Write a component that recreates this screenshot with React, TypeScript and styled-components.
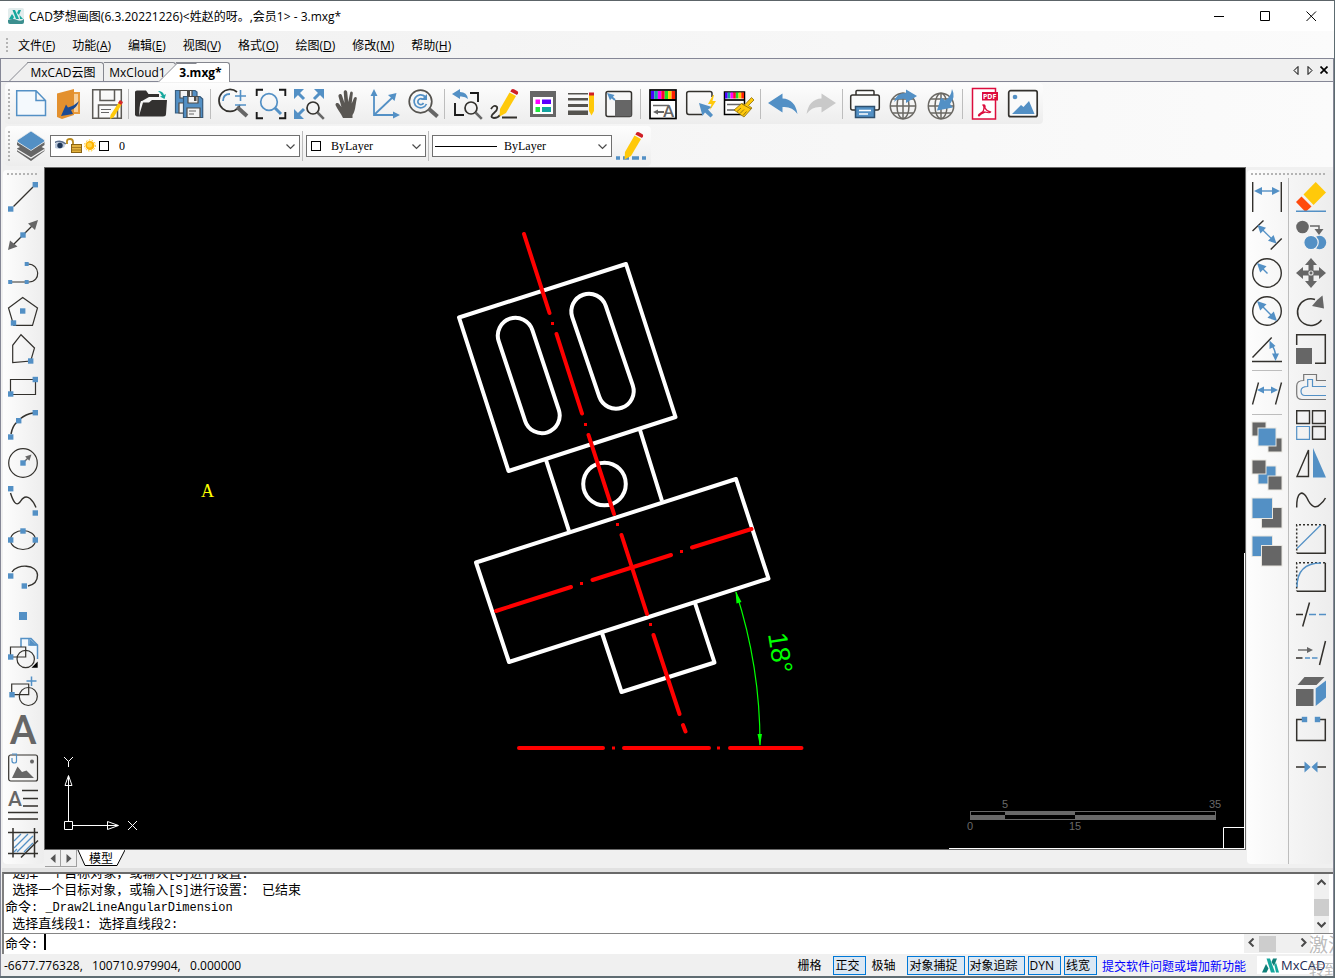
import React from "react";
import styled, { createGlobalStyle, css } from "styled-components";

const BLUE = "#5390c5";
const DARK = "#33312d";
const GRAY = "#666666";
const UI = `"Open Sans", "Noto Sans CJK SC", sans-serif`;
const SERIF = `"Liberation Serif", "Noto Sans CJK SC", serif`;

const GlobalStyle = createGlobalStyle`
  *, *::before, *::after { box-sizing: border-box; }
  body { margin: 0; background: #f0f0f0; font-family: ${UI}; font-size: 12px; color: #000; }
  button, input, select { font: inherit; color: inherit; margin: 0; padding: 0; border: 0; background: none; border-radius: 0; }
  svg { display: block; }
`;

/* ---------- window frame ---------- */

const Window = styled.div`
  position: relative;
  display: flex;
  flex-direction: column;
  min-height: 100vh;
  overflow: hidden;
  border-top: 1px solid #5c6468;
  border-right: 1px solid #5c6b70;
  border-bottom: 2px solid #5f6c72;
`;

const TitleBar = styled.header`
  display: flex;
  align-items: center;
  height: 30px;
  padding-left: 8px;
  background: #fff;
`;

const Title = styled.h1`
  flex: 1;
  margin: 0 0 0 5px;
  font-size: 12px;
  font-weight: 400;
  white-space: nowrap;
`;

const CaptionButton = styled.button`
  display: grid;
  place-items: center;
  width: 46px;
  height: 30px;
`;

const MenuBar = styled.nav`
  display: flex;
  align-items: center;
  gap: 17px;
  height: 27px;
  padding-left: 6px;
  background: linear-gradient(90deg, #f0f0f0, #fbfbfb);
`;

const MenuButton = styled.button`
  height: 22px;
  white-space: nowrap;
`;

const Grip = styled.span<{ $across?: boolean }>`
  flex: none;
  ${(p) =>
    p.$across
      ? css`
          height: 2px;
          margin: 3px 6px 3px 4px;
          background: repeating-linear-gradient(90deg, #b4b4b4 0 2px, transparent 2px 4px);
        `
      : css`
          width: 2px;
          height: 30px;
          margin-right: 2px;
          background: repeating-linear-gradient(180deg, #b4b4b4 0 2px, transparent 2px 4px);
        `}
`;

const MenuGrip = styled(Grip)`
  height: 14px;
  margin-right: -7px;
`;

const Client = styled.div`
  flex: 1;
  display: flex;
  flex-direction: column;
  border-top: 1px solid #858796;
  border-left: 1px solid #858796;
  border-right: 1px solid #858796;
`;

/* ---------- document tabs ---------- */

const TabStrip = styled.div`
  display: flex;
  align-items: flex-end;
  height: 23px;
  padding-left: 26px;
  border-bottom: 1px solid #858796;
  background: #f0f0f0;
`;

const DocTab = styled.button<{ $active?: boolean; $slanted?: boolean; $width: number }>`
  position: relative;
  width: ${(p) => p.$width}px;
  height: ${(p) => (p.$active ? 20 : 19)}px;
  margin-bottom: ${(p) => (p.$active ? -1 : 0)}px;
  padding-right: 4px;
  border-top: 1px solid #85878f;
  border-right: 1px solid #85878f;
  border-radius: 0 3px 0 0;
  background: ${(p) => (p.$active ? "#fff" : "#f0f0f0")};
  font-weight: ${(p) => (p.$active ? 700 : 400)};
  line-height: 17px;
  white-space: nowrap;
  ${(p) =>
    p.$slanted &&
    css`
      &::before {
        content: "";
        position: absolute;
        left: -18px;
        bottom: 0;
        width: 20px;
        height: 19px;
        border-left: 1px solid #85878f;
        border-top: 1px solid #85878f;
        background: inherit;
        transform: skewX(-45deg);
        transform-origin: bottom left;
      }
    `}
  span {
    position: relative;
  }
`;

const TabTools = styled.div`
  display: flex;
  align-items: center;
  gap: 5px;
  height: 22px;
  margin-left: auto;
  padding-right: 5px;
`;

const TabTool = styled.button`
  display: grid;
  place-items: center;
  width: 9px;
  height: 12px;
`;

/* ---------- toolbars ---------- */

const Bands = styled.div`
  display: flex;
  flex-direction: column;
  align-items: flex-start;
  gap: 2px;
  padding: 1px 0 1px 4px;
  background: linear-gradient(90deg, #f0f0f0, #fbfbfb);
`;

const Toolbar = styled.div`
  display: flex;
  align-items: center;
  height: 41px;
  padding: 0 1px 0 3px;
  border-radius: 4px;
  background: linear-gradient(180deg, #fdfdfd, #ededed);
`;

const PropertyBar = styled(Toolbar)`
  height: 40px;
`;

const ToolButton = styled.button`
  flex: none;
  display: grid;
  place-items: center;
  width: 38px;
  height: 38px;
  svg {
    overflow: visible;
  }
`;

const Separator = styled.span<{ $across?: boolean }>`
  flex: none;
  background: #bdbdbd;
  ${(p) =>
    p.$across
      ? css`
          width: 30px;
          height: 1px;
          margin: 2px 0 3px;
        `
      : css`
          width: 1px;
          height: 30px;
          margin: 0 3px 0 2px;
        `}
`;

const Combo = styled.label<{ $width: number }>`
  display: flex;
  align-items: center;
  width: ${(p) => p.$width}px;
  height: 22px;
  padding: 0 4px;
  border: 1px solid #707070;
  background: #fff;
  font-family: ${SERIF};
`;

const ComboSelect = styled.select`
  appearance: none;
  flex: 1;
  min-width: 0;
  height: 18px;
  padding-left: 10px;
  outline: 0;
`;

const ColorBox = styled.span`
  width: 10px;
  height: 10px;
  border: 1px solid #000;
`;

const LineSample = styled.span`
  width: 62px;
  height: 1px;
  margin-left: -2px;
  margin-right: -3px;
  background: #000;
`;

/* ---------- work area ---------- */

const WorkArea = styled.main`
  flex: 1;
  display: flex;
  background: #f0f0f0;
`;

const SideDock = styled.aside<{ $right?: boolean }>`
  flex: none;
  display: flex;
  flex-direction: column;
  margin: 3px 0 4px ${(p) => (p.$right ? 1 : 2)}px;
  width: ${(p) => (p.$right ? 86 : 41)}px;
  border-radius: 4px;
  background: linear-gradient(90deg, #fdfdfd, #ededed);
`;

const DockColumns = styled.div`
  flex: 1;
  display: flex;
  gap: 2px;
`;

const DockColumn = styled.div<{ $ruled?: boolean }>`
  display: flex;
  flex-direction: column;
  align-items: center;
  width: ${(p) => (p.$ruled ? 42 : 39)}px;
  padding-right: ${(p) => (p.$ruled ? 2 : 0)}px;
  border-right: ${(p) => (p.$ruled ? "1px solid #bdbdbd" : "0")};
`;

const CanvasColumn = styled.section`
  flex: 1;
  min-width: 0;
  display: flex;
  flex-direction: column;
`;

const Canvas = styled.div`
  flex: 1;
  display: flex;
  border: 1px solid #696969;
  background: #000;
  overflow: hidden;
  svg {
    flex: 1;
    min-width: 0;
  }
`;

const SheetTabs = styled.div`
  display: flex;
  height: 18px;
  padding-left: 1px;
`;

const SheetNav = styled.button`
  display: grid;
  place-items: center;
  width: 16px;
  height: 17px;
  border: 1px solid #a0a0a0;
  border-left: 0;
  border-top: 0;
`;

const SheetTab = styled.button`
  position: relative;
  width: 48px;
  height: 17px;
  line-height: 16px;
  svg {
    position: absolute;
    inset: 0;
  }
  span {
    position: relative;
  }
`;

/* ---------- command panel ---------- */

const CommandPanel = styled.section`
  flex: none;
  margin-left: 1px;
  border-top: 4px solid #e1e1e1;
  background: #fff;
  font-family: "Liberation Mono", "Noto Sans CJK SC", monospace;
`;

const CommandFrame = styled.div`
  border-top: 2px solid #696969;
  border-left: 2px solid #808080;
`;

const LogRow = styled.div`
  display: flex;
  height: 60px;
  border-bottom: 1px solid #858585;
`;

const Log = styled.div`
  flex: 1;
  display: flex;
  flex-direction: column;
  justify-content: flex-end;
  overflow: hidden;
  padding: 0 0 2px 1px;
`;

const LogLine = styled.p`
  flex: none;
  margin: 0;
  height: 17px;
  line-height: 17px;
  white-space: pre;
`;

const Han = styled.span`
  font-family: "Noto Sans CJK SC", sans-serif;
  font-size: 13px;
  line-height: 17px;
`;

const InputRow = styled.div`
  display: flex;
  align-items: flex-start;
  height: 20px;
  padding: 0 22px 0 1px;
`;

const Prompt = styled.label`
  flex: none;
  width: 39px;
  height: 17px;
  line-height: 15px;
  white-space: pre;
`;

const CommandInput = styled.input`
  flex: 1;
  height: 16px;
  border-left: 2px solid #000;
  outline: 0;
`;

const ScrollBar = styled.div<{ $across?: boolean }>`
  flex: none;
  display: flex;
  flex-direction: ${(p) => (p.$across ? "row" : "column")};
  justify-content: space-between;
  background: #f0f0f0;
  ${(p) => (p.$across ? "width: 67px; height: 19px;" : "width: 15px; margin-right: 4px;")}
`;

const ScrollArrow = styled.button`
  display: grid;
  place-items: center;
  width: 15px;
  height: 17px;
`;

const Thumb = styled.span<{ $across?: boolean }>`
  background: #cdcdcd;
  ${(p) =>
    p.$across ? "width: 17px; height: 16px; margin: 2px 20px 1px 0;" : "width: 15px; height: 17px; margin-top: 8px;"}
`;

/* ---------- status bar ---------- */

const StatusBar = styled.footer`
  flex: none;
  display: flex;
  align-items: center;
  height: 22px;
  padding-left: 3px;
  background: #f0f0f0;
`;

const Coordinates = styled.output`
  flex: 1;
  white-space: pre;
`;

const StatusToggle = styled.button<{ $on?: boolean }>`
  height: 19px;
  margin-right: 3px;
  padding: 0 ${(p) => (p.$on ? 6 : 8)}px 0 1px;
  border: 1px solid ${(p) => (p.$on ? "#0078d7" : "transparent")};
  background: ${(p) => (p.$on ? "#dbe8f4" : "transparent")};
  line-height: 18px;
  white-space: nowrap;
`;

const FeedbackLink = styled.a`
  margin: 2px 11px 0 2px;
  color: #0000ff;
  text-decoration: none;
  white-space: nowrap;
`;

const Brand = styled.div`
  display: flex;
  align-items: center;
  gap: 2px;
  width: 76px;
  height: 18px;
  padding-left: 5px;
  background: #fff;
  font-size: 13px;
  color: #1b2a55;
`;

const Watermark = styled.div`
  position: absolute;
  left: calc(100% - 25px);
  bottom: -4px;
  width: 200px;
  color: rgba(130, 130, 130, 0.55);
  font-size: 19px;
  line-height: 26px;
  pointer-events: none;
  white-space: nowrap;
  small {
    display: block;
    font-size: 15px;
    line-height: 22px;
  }
`;

/* ---------- icon parts ---------- */

const Icon = ({ children, w = 30, h = 30 }: { children: React.ReactNode; w?: number; h?: number }) => (
  <svg width={w} height={h} viewBox={`0 0 ${w} ${h}`} fill="none" stroke={DARK} strokeWidth="1.2" aria-hidden="true">
    {children}
  </svg>
);

const Dot = ({ x, y, s = 5.4 }: { x: number; y: number; s?: number }) => (
  <rect x={x - s / 2} y={y - s / 2} width={s} height={s} fill={BLUE} stroke="none" />
);

type ArrowProps = { x1: number; y1: number; x2: number; y2: number; both?: boolean; color?: string; head?: number; width?: number };

const Arrow = ({ x1, y1, x2, y2, both, color = BLUE, head = 8, width = 1.4 }: ArrowProps) => {
  const len = Math.hypot(x2 - x1, y2 - y1);
  const ux = (x2 - x1) / len;
  const uy = (y2 - y1) / len;
  const tip = (x: number, y: number, d: number) => {
    const bx = x - ux * head * d;
    const by = y - uy * head * d;
    const hw = head * 0.5;
    return `${x},${y} ${bx - uy * hw},${by + ux * hw} ${bx + uy * hw},${by - ux * hw}`;
  };
  const cut = head * 0.6;
  return (
    <>
      <line x1={both ? x1 + ux * cut : x1} y1={both ? y1 + uy * cut : y1} x2={x2 - ux * cut} y2={y2 - uy * cut} stroke={color} strokeWidth={width} />
      <polygon points={tip(x2, y2, 1)} fill={color} stroke="none" />
      {both && <polygon points={tip(x1, y1, -1)} fill={color} stroke="none" />}
    </>
  );
};

const Block = ({ x, y, s, color }: { x: number; y: number; s: number; color: string }) => (
  <rect x={x} y={y} width={s} height={s} fill={color} stroke="#e8e6e0" strokeWidth="1" />
);

const Pencil = ({ x, y }: { x: number; y: number }) => (
  <g transform={`translate(${x} ${y})`} stroke="none">
    <path d="M10.5 3.5 L17 7 L7 24 L0.5 27.5 L1 20 Z" fill="#ffc90a" />
    <path d="M12.5 0.5 Q13.5 -0.5 15 0.3 L18.5 2.3 Q19.5 3 19 4.2 L18 6 L11.3 2.4 Z" fill="#cf1f26" />
  </g>
);

const Spectrum = ({ x, y, w, h }: { x: number; y: number; w: number; h: number }) => (
  <g stroke="none">
    {["#4a00ff", "#12a5a0", "#ff00ff", "#ff0030", "#20e020", "#ffd000", "#ff2000"].map((c, i) => (
      <rect key={c} x={x + (w / 7) * i} y={y} width={w / 7} height={h} fill={c} />
    ))}
  </g>
);

const Globe = () => (
  <g stroke="#6a6863" strokeWidth="1.5">
    <circle cx="15" cy="17" r="12.7" />
    <ellipse cx="15" cy="17" rx="6" ry="12.7" />
    <path d="M15 4 V30 M2.3 17 H27.7 M4.5 10 H25.5 M4.5 24 H25.5" />
  </g>
);

const Lens = ({ x, y, r }: { x: number; y: number; r: number }) => (
  <>
    <circle cx={x} cy={y} r={r} stroke={DARK} strokeWidth="1.7" />
    <path d={`M${x + r * 0.75} ${y + r * 0.75} L${x + r * 1.8} ${y + r * 1.8}`} stroke={GRAY} strokeWidth="2.5" />
  </>
);

const AppMark = () => (
  <svg width="16" height="16" viewBox="0 0 16 16" aria-hidden="true">
    <rect width="16" height="16" rx="2" fill="#e3eded" />
    <path d="M1 11 L4 6 L6 9 L5 11 Z M4.5 2 H7 L11 11 H8 Z M9 5 L10.500 2 H13 L11 7 Z M11.500 7 L15 11 H12 Z" fill="#16a79d" />
    <path d="M0 12 Q5 10 9 12 T16 11 V14 Q16 16 14 16 H2 Q0 16 0 14 Z" fill="#3c8f8f" />
  </svg>
);

const BrandMark = () => (
  <svg width="17" height="15" viewBox="0 0 17 15" aria-hidden="true">
    <path d="M0 14.500 L4 6 L6.500 10.500 L4.500 14.500 Z" fill="#0f7f78" />
    <path d="M4.500 0.500 H8 L13 14.500 H9 Z" fill="#16a79d" />
    <path d="M9.500 4 L11 0.500 H15 L12 8 Z" fill="#0f7f78" />
    <path d="M12.500 7.500 L14 4.500 L17 14.500 H14 Z" fill="#16a79d" />
  </svg>
);

type Tool = [string, React.ReactNode] | null;

const Tools = ({ items, across }: { items: Tool[]; across?: boolean }) => (
  <>
    {items.map((tool, i) =>
      tool ? (
        <ToolButton key={tool[0]} type="button" aria-label={tool[0]}>
          <Icon>{tool[1]}</Icon>
        </ToolButton>
      ) : (
        <Separator key={i} $across={across} />
      ),
    )}
  </>
);

/* ---------- standard toolbar ---------- */

const standardTools: Tool[] = [
  ["新建", <path key="i" d="M0.7 1.7 H20 L29.5 11.5 V26.5 H0.7 Z M20 1.7 V11.5 H29.5" stroke={BLUE} strokeWidth="1.5" fill="#f4f9fd" />],
  ["打开图纸", (
    <g key="i" stroke="none">
      <path d="M18 3 H26 V25 H18 Z" fill="#e89a3c" />
      <path d="M20 5 H24 V23 H20 Z" fill="#f7cf9b" />
      <path d="M3 4.5 L20 0 V26 L8 30 L3 28 Z" fill="#e3902e" />
      <path d="M25 12 Q22 20 17 21 L19 25 L7 27 L12 15.5 L14 18.5 Q20 17 25 12 Z" fill="#1b4a94" />
    </g>
  )],
  ["保存", (
    <g key="i">
      <path d="M0.7 0.7 H29.3 V29.3 H0.7 Z M8 0.7 V11.5 H22.5 V0.7 M6.5 29.3 V16 H25.5 V29.3" fill="#fafafa" stroke="#5c5a56" strokeWidth="1.5" />
      <path d="M9 20.5 H19 M9 23.5 H17" stroke={GRAY} />
      <path d="M27 13 L30 15 L21.5 28.5 L18 30 L18.5 26 Z" fill="#ffc90a" stroke="none" />
      <path d="M26 14 L28 11 L31 13 L29.5 16 Z" fill="#d42a2a" stroke="none" />
    </g>
  )],
  null,
  ["打开", (
    <g key="i" stroke="none">
      <path d="M-1 3 Q-1 1.5 1 1.5 H10 L12.5 5 H23 V8 H13 L6 12 H5 L1 24 L-1 26 Z" fill="#333130" />
      <path d="M3 27 L7 13.5 H13 L16 11 H31 L30 25 Q30 27.5 27 27.5 H3 Z" fill="#333130" />
      <path d="M-1 10 V26 Q0 28 3 27.5 L4 13 Z" fill="#333130" />
      <path d="M22 2 Q27 2 28 6 L30 5 L28.5 10 L24 7.5 L26 7 Q25 4 22 2 Z" fill="#16a79d" />
    </g>
  )],
  ["全部保存", (
    <g key="i">
      <path d="M1.5 1.5 H21 L23 3 V24 H1.5 Z" fill={BLUE} stroke="#3a5f80" />
      <path d="M6 1.5 H18 V9 H6 Z M5 14 H12 V24 H5 Z" fill="#f4f4f4" stroke="#4c4a46" />
      <path d="M13 2 H16 V7 H13 Z" fill="#4c4a46" stroke="none" />
      <path d="M9.5 7.5 H26 L28.7 10 V28.5 H9.5 Z" fill={BLUE} stroke="#36597a" />
      <path d="M14 7.5 H24 V14 H14 Z M13 19 H26 V28.5 H13 Z" fill="#f4f4f4" stroke="#4c4a46" />
      <path d="M20 8 H22.5 V12 H20 Z" fill="#4c4a46" stroke="none" />
      <path d="M15 22 H22 M15 25 H20" stroke={GRAY} />
    </g>
  )],
  null,
  ["实时缩放", (
    <g key="i">
      <path d="M19 3 A11 11 0 1 0 20 19 M20 19 L22 16" strokeWidth="1.7" />
      <path d="M19 18 L29 27" stroke={GRAY} strokeWidth="4" />
      <path d="M5 12 Q5 5 12 5" stroke={BLUE} strokeWidth="1.8" />
      <path d="M17 7 H28 M22.5 1 V12 M17 16 H28" stroke={BLUE} strokeWidth="1.6" />
    </g>
  )],
  ["窗口缩放", (
    <g key="i">
      <path d="M0.7 7 V0.7 H7 M23 0.7 H29.3 V7 M29.3 23 V29.3 H23 M7 29.3 H0.7 V23" stroke="#1a1a1a" strokeWidth="1.9" />
      <circle cx="13" cy="13" r="8.3" stroke={BLUE} strokeWidth="1.7" />
      <path d="M19 19 L25 25" stroke={BLUE} strokeWidth="3" />
    </g>
  )],
  ["全部缩放", (
    <g key="i">
      <path d="M10 10 L4 4 M20 10 L26 4 M10 20 L4 26" stroke={BLUE} strokeWidth="3" />
      <path d="M0 0 H10 L0 10 Z M30 0 H20 L30 10 Z M0 30 V20 L10 30 Z" fill={BLUE} stroke="none" />
      <Lens x={19} y={19} r={6} />
    </g>
  )],
  ["平移", (
    <path key="i" d="M11 29 C9 24 5 20 3.5 16 C3.5 13.5 6 13.5 7.5 15.5 L9.5 18 L6.5 7.500 C6 5 9 4 10 6.500 L12.5 14 L11.700 3 C12 0.500 14.700 0.500 15.2 3 L16.2 13 L18.2 3.500 C18.700 1.500 21.200 2.500 20.800 4.500 L19.7 14.500 L22 9 C23 7 25.500 8 24.700 10 C23.200 17 23.500 22 20.500 26 V29 Z" fill="#5a5753" stroke="none" />
  )],
  ["坐标系", (
    <g key="i">
      <path d="M4 4 V26 H26 M4 26 L24 7" stroke={BLUE} strokeWidth="1.8" />
      <path d="M4 0 L7.5 7 H0.5 Z M30 26 L23 22.5 V29.5 Z M26.500 4 L24.5 12 L18 6 Z" fill={BLUE} stroke="none" />
    </g>
  )],
  ["重新生成", (
    <g key="i">
      <circle cx="12.5" cy="12.5" r="11.3" stroke="#55534f" strokeWidth="1.7" />
      <path d="M21 20 L29.500 27.500" stroke={GRAY} strokeWidth="4" />
      <path d="M17 7.5 A6.5 6.5 0 1 0 18.5 15 M15 10.5 A3 3 0 1 0 15.5 14" stroke={BLUE} strokeWidth="1.7" />
      <path d="M19 5 V11 H13 Z" fill={BLUE} stroke="none" />
    </g>
  )],
  null,
  ["上一视图", (
    <g key="i">
      <path d="M18 4 H26 V13 M3 14 V26 H12" stroke="#1a1a1a" strokeWidth="1.9" />
      <path d="M0 5 L8 0 V3 Q15 3 16 10 Q13 7 8 7.5 V10 Z" fill={BLUE} stroke="none" />
      <Lens x={19} y={19} r={6} />
    </g>
  )],
  ["画笔", (
    <g key="i">
      <path d="M1 20 Q4 15 7 18 Q8 21 4 24 Q-1 28 4 29 Q8 29 10 26 M12 28.5 H27" strokeWidth="1.8" />
      <Pencil x={9} y={0} />
    </g>
  )],
  ["图层特性", (
    <g key="i" stroke="none">
      <path d="M2 2 H28 V28 H2 Z" fill={GRAY} />
      <path d="M5 8 H25 V25 H5 Z" fill="#fff" />
      <path d="M7.5 10.5 H12 V15 H7.5 Z" fill="#ff00ff" />
      <path d="M14 10.5 H23 V15 H14 Z" fill="#5a00ff" />
      <path d="M7.5 18 H12 V23 H7.5 Z" fill="#20e840" />
      <path d="M14 18 H23 V23 H14 Z" fill="#12a5a0" />
    </g>
  )],
  ["线宽设置", (
    <g key="i" stroke="none">
      <path d="M2 4 H22 V5.5 H2 Z M2 9 H22 V11.5 H2 Z M2 15 H22 V18 H2 Z M2 21.5 H22 V26 H2 Z" fill="#55534f" />
      <path d="M23 6 H28 V22 L25.5 26.5 L23 22 Z" fill="#ffc90a" />
      <path d="M23 3.5 H28 V6.5 H23 Z" fill="#cf1f26" />
    </g>
  )],
  ["比例", (
    <g key="i">
      <rect x="2" y="2.5" width="25.5" height="25" rx="2" strokeWidth="1.5" fill="#f7f7f7" />
      <path d="M11 11 H27.5 V27.5 H11 Z" fill={GRAY} stroke="none" />
      <Arrow x1={11} y1={11} x2={3} y2={4} head={7} width={2} />
    </g>
  )],
  null,
  ["文字样式", (
    <g key="i">
      <rect x="2" y="1" width="26" height="28.5" fill="#fff" stroke="#000" strokeWidth="1.7" />
      <Spectrum x={3} y={2} w={24} h={8.5} />
      <path d="M2 11 H28" stroke="#000" strokeWidth="2" />
      <path d="M5 16.5 H21" stroke={GRAY} strokeWidth="1.5" />
      <Arrow x1={16} y1={23} x2={5} y2={23} head={5} width={2} color={GRAY} />
      <text x="15" y="28" fontFamily="Roboto, sans-serif" fontSize="17" fontWeight="500" fill={GRAY} stroke="none">A</text>
    </g>
  )],
  ["快速选择", (
    <g key="i">
      <path d="M16 25.5 H3 Q0.7 25.5 0.7 23 V4.5 Q0.7 2.5 3 2.5 H24 Q26 2.5 26 4.5 V8" strokeWidth="1.5" />
      <path d="M13 14 L26 18 L22 20.5 L27 26 L24.5 28.5 L19 23.5 L16.5 27 Z" fill={BLUE} stroke="none" />
      <path d="M27 6 L22 15 H25.5 L24 21 L30 12 H26.5 L28 6 Z" fill="#ffc90a" stroke="none" />
    </g>
  )],
  ["特性匹配", (
    <g key="i">
      <rect x="0.5" y="3" width="20" height="22.5" fill="#fff" stroke="#000" strokeWidth="1.5" />
      <Spectrum x={1} y={3.5} w={19} h={6} />
      <path d="M1 11 H20" stroke="#000" strokeWidth="1.7" />
      <path d="M3 15.5 H18 M3 21 H13" stroke={GRAY} strokeWidth="1.5" />
      <path d="M27.500 8.500 L30 11 L24.500 16.500 L28 19 L20 28 L10 21 L17.500 14.500 L21 15.500 Z" fill="#ffc90a" stroke="#8a6d10" strokeWidth="0.8" />
      <path d="M13 22.5 L17 19 M16 24.500 L20 20.500 M19 26.500 L22.500 22.500 M18 15 L27 20" stroke="#8a6d10" strokeWidth="0.9" />
    </g>
  )],
  null,
  ["撤销", <path key="i" d="M0 14 L14.5 4.5 V9.5 Q27 10 29.5 25 Q24 17 14.5 18 V23.5 Z" fill={BLUE} stroke="none" />],
  ["重做", <path key="i" d="M30 14 L15.5 4.5 V9.5 Q3 10 0.5 25 Q6 17 15.5 18 V23.5 Z" fill="#c9c9c9" stroke="none" />],
  null,
  ["打印", (
    <g key="i" strokeWidth="1.5">
      <path d="M6 6 V2.5 Q6 1.5 7 1.5 H23 Q24 1.5 24 2.5 V6" fill="#fff" />
      <path d="M6 21 H2.5 Q0.7 21 0.7 19 V8 Q0.7 6 2.5 6 H27.5 Q29.3 6 29.3 8 V19 Q29.3 21 27.5 21 H24" fill="#fafafa" />
      <path d="M5.5 21 V17.5 H24.5 V28.5 H5.5 Z" fill={BLUE} stroke="#2e4f6e" />
      <path d="M9 21.5 H21 M9 25 H18" stroke="#fff" strokeWidth="1.3" />
    </g>
  )],
  ["上传到云", (
    <g key="i">
      <Globe />
      <path d="M6 13 Q8 4 18 4 V0.5 L29 7 L18 14 V10 Q10 9 6 13 Z" fill={BLUE} stroke="none" />
    </g>
  )],
  ["从云下载", (
    <g key="i">
      <Globe />
      <path d="M26 0 Q30 8 24 15 L27 18.5 L11 21.5 L15 8.5 L19 11.5 Q25 8 26 0 Z" fill={BLUE} stroke="none" />
    </g>
  )],
  null,
  ["导出PDF", (
    <g key="i">
      <path d="M2.5 -0.5 H25.5 V30 H2.5 Z" fill="#fff" stroke="#dc0d3d" strokeWidth="1.5" />
      <path d="M12 3 H28 V11.5 H12 Z" fill="#dc0d3d" stroke="none" />
      <text x="13" y="10" fontFamily="Noto Sans, sans-serif" fontSize="7" fontWeight="700" fill="#fff" stroke="none">PDF</text>
      <path d="M13 16 Q15.5 15 15 19 Q17 22.5 20.5 23 Q20 24.5 15 23 Q11 24 9 27 Q7 26 13 22.5 Q15 18 13 16 Z" stroke="#dc0d3d" strokeWidth="1.3" />
    </g>
  )],
  ["导出图片", (
    <g key="i">
      <rect x="0.7" y="1.7" width="28.5" height="26" rx="2" strokeWidth="1.7" fill="#fafafa" />
      <circle cx="7" cy="8" r="2.3" fill={BLUE} stroke="none" />
      <path d="M4 25 L13 16 L15.5 18 L21 12 L26.5 25 Z" fill={BLUE} stroke="none" />
    </g>
  )],
];

/* ---------- drawing tools ---------- */

const drawTools: Tool[] = [
  ["直线", <g key="i"><path d="M5.5 24.5 L25 5" /><Dot x={2.7} y={27} /><Dot x={27.3} y={2.7} /></g>],
  ["构造线", <g key="i"><path d="M5 25 L25 5" /><path d="M30 0 L20 3.5 L27 10 Z M0 30 L2 20.5 L9.5 26.5 Z" fill={GRAY} stroke="none" /><Dot x={15} y={15} /></g>],
  ["多段线", <g key="i"><path d="M4 24 H21 C33 24 32.5 6 20 6" /><Dot x={2.2} y={24} s={4} /><Dot x={18.7} y={24} s={4} /><Dot x={18.7} y={6} s={4} /></g>],
  ["正多边形", <g key="i"><path d="M14.7 1.5 L29.5 12 L24.5 29.3 H5.7 L0.5 12 Z" /><Dot x={14.7} y={15} /><Dot x={5.5} y={27} /></g>],
  ["多边形", <g key="i"><path d="M13 0.7 L26.5 14 L22.7 27 L4.7 28.5 V11.3 Z" /><Dot x={22.7} y={27} /></g>],
  ["矩形", <g key="i"><path d="M2.5 7.5 H27.5 V22.5 H2.5 Z" /><Dot x={2.7} y={22} /><Dot x={27.3} y={7.5} /></g>],
  ["圆弧", <g key="i"><path d="M3 24 Q4.5 16 9 12 M12 9 Q18 4 25 3" strokeWidth="1.5" /><Dot x={2.7} y={27} /><Dot x={10.7} y={10.7} /><Dot x={27.3} y={2.7} /></g>],
  ["圆", <g key="i"><circle cx="15" cy="15" r="14.3" /><Arrow x1={15} y1={15} x2={23.5} y2={6.5} head={6} color={GRAY} /><Dot x={15} y={15} /></g>],
  ["样条曲线", <g key="i"><path d="M2.5 7 C5 15 8 21 12 16 C15 11 18 9.5 22 12.5 C25 15 26.5 18 28 21.5" strokeWidth="1.4" /><Dot x={2.7} y={2.7} /><Dot x={27.3} y={27} /></g>],
  ["椭圆", <g key="i"><ellipse cx="15" cy="16" rx="12.5" ry="9.5" /><Dot x={15} y={7} /><Dot x={2.7} y={16} /><Dot x={27.3} y={16} /></g>],
  ["椭圆弧", <g key="i"><path d="M4 10 C9 1.5 29 2 29.5 13 C29.5 20 25 23 20 24" strokeWidth="1.4" /><Dot x={2.7} y={14} /><Dot x={16.3} y={24} /></g>],
  ["点", <Dot key="i" x={15} y={16} s={8} />],
  ["插入块", (
    <g key="i">
      <path d="M13 9 V0.5 H23 L29.5 7 V21 M21 0.5 V7 H29.5" stroke={BLUE} strokeWidth="1.5" fill="#f2f8fd" />
      <path d="M22 1 V7.5 H29 Z" fill={BLUE} stroke="none" />
      <path d="M2.5 9 H17.7 V19 H2.5 Z" /><circle cx="17.7" cy="21" r="8.7" />
      <Dot x={2.7} y={19} /><path d="M29.7 23.5 V29.7 H23.5 Z" fill="#000" stroke="none" />
    </g>
  )],
  ["创建块", <g key="i"><path d="M23.5 0.5 V10 M18.5 5 H28.5" stroke={BLUE} strokeWidth="1.5" /><path d="M3.7 8 H20.7 V18.7 H3.7 Z" /><circle cx="20.3" cy="20.5" r="9" /><Dot x={4} y={18.7} /></g>],
  ["单行文字", <text key="i" x="15" y="30" textAnchor="middle" fontFamily="Roboto, sans-serif" fontSize="41" fontWeight="500" fill={GRAY} stroke="none">A</text>],
  ["图像", (
    <g key="i">
      <rect x="0.7" y="3" width="28.8" height="26" rx="2" />
      <path d="M4 26 L9.5 14.5 L14 20 L18.5 18.5 L26 26 Z" fill={GRAY} stroke="none" /><circle cx="24" cy="9.5" r="2" fill={GRAY} stroke="none" />
      <path d="M4 2 H8.5 V9 Q8.5 11 6.5 11 Q4 11 4 9 V6" stroke={BLUE} />
    </g>
  )],
  ["多行文字", (
    <g key="i">
      <text x="0" y="16" fontFamily="Roboto, sans-serif" fontSize="21" fontWeight="500" fill={GRAY} stroke="none">A</text>
      <path d="M14 0.5 H30 M15 8.5 H30 M15 16 H30 M0 22.5 H30 M0 29 H30" strokeWidth="1.5" />
    </g>
  )],
  ["填充", (
    <g key="i">
      <path d="M6 20 L20 6 M6 13 L13 6 M9 24 L25 8 M16 24 L25 15 M6 24 L9 21" stroke={BLUE} strokeWidth="1.3" />
      <path d="M5 0 V29.5 M26.5 0 V29.5 M0 4.5 H30 M0 25.5 H30" strokeWidth="1.5" /><path d="M13 29.5 L30 12.5" strokeWidth="1.5" />
    </g>
  )],
];

/* ---------- dimension and order tools ---------- */

const dimensionTools: Tool[] = [
  ["线性标注", <g key="i"><path d="M0.7 0 V30 M29.3 0 V30" strokeWidth="1.4" /><Arrow x1={2} y1={9} x2={28} y2={9} both /></g>],
  ["对齐标注", <g key="i"><path d="M0.5 11 L11.5 0.5 M18.7 29.5 L29.7 18.5" strokeWidth="1.4" /><Arrow x1={5.5} y1={5} x2={24.5} y2={23.5} both /></g>],
  ["半径标注", <g key="i"><circle cx="15" cy="15" r="14.3" strokeWidth="1.4" /><Arrow x1={15.5} y1={15.5} x2={5} y2={5} head={9} /></g>],
  ["直径标注", <g key="i"><circle cx="15" cy="15" r="14.3" strokeWidth="1.4" /><Arrow x1={5} y1={5} x2={25} y2={25} both head={9} /></g>],
  ["角度标注", (
    <g key="i">
      <path d="M0.5 23.5 L19.7 3.5 M0 27.5 H30" strokeWidth="1.4" />
      <path d="M19 10 Q23 15 23.5 21" stroke={BLUE} strokeWidth="1.5" />
      <path d="M17.5 6.5 L23.5 12 L17.5 15 Z M23.5 27 L20 19.5 H27 Z" fill={BLUE} stroke="none" />
    </g>
  )],
  null,
  ["倾斜标注", <g key="i"><path d="M0.5 26.5 L6.5 4.5 M23.5 26.5 L29.5 4.5" strokeWidth="1.4" /><Arrow x1={5} y1={12} x2={26} y2={12} both head={7} /></g>],
  null,
  ["前置", <g key="i"><Block x={0} y={0} s={14} color={GRAY} /><Block x={16} y={16} s={14} color={GRAY} /><Block x={6} y={6} s={18} color={BLUE} /></g>],
  ["后置", <g key="i"><Block x={6} y={6} s={18} color={BLUE} /><Block x={0} y={0} s={14} color={GRAY} /><Block x={16} y={16} s={14} color={GRAY} /></g>],
  ["置于对象之上", <g key="i"><Block x={9.5} y={9.5} s={20.5} color={GRAY} /><Block x={0} y={0} s={20.5} color={BLUE} /></g>],
  ["置于对象之下", <g key="i"><Block x={0} y={0} s={20.5} color={BLUE} /><Block x={9.5} y={9.5} s={20.5} color={GRAY} /></g>],
];

/* ---------- edit tools ---------- */

const editTools: Tool[] = [
  ["删除", (
    <g key="i" stroke="none">
      <path d="M19.7 0 L30 10.5 L17.5 23 L7.5 12.5 Z" fill="#ffc90a" />
      <path d="M5.5 14.5 L15.5 24.5 L9.5 30 L0 20 Z" fill="#ff4a0c" />
      <path d="M0 28.5 H30 V30 H0 Z" fill={BLUE} />
    </g>
  )],
  ["复制", (
    <g key="i">
      <circle cx="6.5" cy="7" r="6.3" fill={GRAY} stroke="none" />
      <circle cx="23.5" cy="22.5" r="6.7" fill={BLUE} stroke="none" /><circle cx="15" cy="22.5" r="7.2" fill={BLUE} stroke="#f4f4f4" />
      <path d="M14 6 H23 V10" stroke={GRAY} strokeWidth="1.5" /><path d="M18.5 9 H27.5 L23 15 Z" fill={GRAY} stroke="none" />
    </g>
  )],
  ["移动", (
    <g key="i">
      <path d="M15 0 L21 7 H17.5 V12.5 H23 V9 L30 15 L23 21 V17.5 H17.5 V23 H21 L15 30 L9 23 H12.5 V17.5 H7 V21 L0 15 L7 9 V12.5 H12.5 V7 H9 Z" fill={GRAY} stroke="none" />
      <circle cx="15" cy="15" r="2" stroke="#ddd" />
    </g>
  )],
  ["旋转", <g key="i"><path d="M19 3.5 A13.3 13.3 0 1 0 25.5 24" strokeWidth="1.5" /><path d="M16 10 Q20 4 26.5 -0.5 L28 12.5 Z" fill={GRAY} stroke="none" /></g>],
  ["缩放", <g key="i"><path d="M0.7 11 V0.7 H29.3 V29.3 H19" strokeWidth="1.5" /><rect y="14" width="16" height="16" fill={GRAY} stroke="none" /></g>],
  ["偏移", (
    <g key="i">
      <path d="M30 8.5 H20.5 V2.5 H7.7 V8.5 Q0.7 8.5 0.7 14 V22 Q0.7 27.5 6 27.5 H30" stroke="#777" />
      <path d="M30 14.5 H16.5 V7.5 H11.7 V14.5 Q5 14.5 5 19 Q5 23.5 9 23.5 H30" stroke={BLUE} />
    </g>
  )],
  ["阵列", <g key="i"><path d="M0.7 0.7 H13.5 V13.5 H0.7 Z M16.5 0.7 H29.3 V13.5 H16.5 Z M16.5 16.5 H29.3 V29.3 H16.5 Z" strokeWidth="1.4" /><path d="M0.7 16.5 H13.5 V29.3 H0.7 Z" stroke={BLUE} /></g>],
  ["镜像", <g key="i"><path d="M12.5 2 V28.5 H1 Z" strokeWidth="1.4" /><path d="M17 0 L30 29.5 H17 Z" fill={BLUE} stroke="none" /></g>],
  ["样条编辑", <path key="i" d="M0.7 21.5 C0.5 5 7 4 11 12 C15 21 20 23 24 18.5 C27 16 28.5 14 29.5 12" strokeWidth="1.5" />],
  ["倒角", <g key="i"><path d="M29.3 0.7 V29.3 H0.7" strokeWidth="1.5" /><path d="M29 0.7 H0.7 V29" strokeWidth="1.5" strokeDasharray="2 2" /><path d="M1 24.5 L25 0.7" stroke={BLUE} /></g>],
  ["圆角", <g key="i"><path d="M29.3 0.7 V29.3 H0.7" strokeWidth="1.5" /><path d="M29 0.7 H0.7 V29" strokeWidth="1.5" strokeDasharray="2 2" /><path d="M1 25 Q1 1 25 1" stroke={BLUE} strokeWidth="1.5" /></g>],
  ["修剪", <g key="i"><path d="M0 14.5 H7 M6.7 26.5 L13.5 2.5" strokeWidth="1.5" /><path d="M13 14.5 H20 M23 14.5 H30" stroke={BLUE} strokeWidth="1.5" /></g>],
  ["延伸", <g key="i"><Arrow x1={2} y1={12} x2={17} y2={12} color={GRAY} head={6} /><path d="M0 20 H6.5 M23.5 27 L29.5 3" strokeWidth="1.5" /><path d="M9 20 H14 M16 20 H21.5" stroke={BLUE} strokeWidth="1.5" /></g>],
  ["分解", (
    <g key="i" stroke="none">
      <path d="M1.5 9 L8.5 1 H28.5 L20.5 9 Z M0 13 H17.5 V30 H0 Z" fill={GRAY} />
      <path d="M19.7 12.5 L30 4.5 V21.5 L19.7 30 Z" fill={BLUE} />
    </g>
  )],
  ["打断", <g key="i"><path d="M6 5.5 H0.7 V26.5 H29.3 V5.5 H24" strokeWidth="1.5" /><Dot x={8.5} y={5.5} /><Dot x={21.5} y={5.5} /></g>],
  ["合并", <g key="i"><path d="M0 15 H9 M21 15 H30" strokeWidth="1.5" /><path d="M8.5 9.5 L14.7 15 L8.5 20.5 Z M21.5 9.5 V20.5 L15.5 15 Z" fill={BLUE} stroke="none" /></g>],
];

const menus: [string, string][] = [
  ["文件", "F"], ["功能", "A"], ["编辑", "E"], ["视图", "V"],
  ["格式", "O"], ["绘图", "D"], ["修改", "M"], ["帮助", "H"],
];

const toggles: [string, boolean][] = [
  ["栅格", false], ["正交", true], ["极轴", false], ["对象捕捉", true],
  ["对象追踪", true], ["DYN", true], ["线宽", true],
];

const Chevron = ({ turn = 0, bold = false }: { turn?: number; bold?: boolean }) => (
  <svg width="9" height="9" viewBox="0 0 9 9" aria-hidden="true">
    <path d="M0.5 2.5 L4.5 6.5 L8.5 2.5" fill="none" stroke="#4a4a4a" strokeWidth={bold ? 2 : 1.2} transform={`rotate(${turn} 4.5 4.5)`} />
  </svg>
);

const Layers = () => (
  <Icon>
    <g stroke="none">
      <path d="M1 17.5 L5 15.5 L15 22 L24.5 15.5 L28.5 17.5 V20 L15 30 L1 20.5 Z" fill={GRAY} />
      <path d="M1 18.5 L15 27 L28.5 18.5" stroke="#f3f3f3" strokeWidth="1.3" fill="none" />
      <path d="M1 14 L15 23.5 L28.5 14 V11 L15 19 L1 11 Z" fill={GRAY} />
      <path d="M15 0 L28.5 9 Q29 10.5 28 11 L15 19.5 L1.5 11 Q0.5 10 1.5 9 Z" fill={BLUE} stroke="#eee" strokeWidth="0.8" />
    </g>
  </Icon>
);

const LayerState = () => (
  <svg width="44" height="16" viewBox="0 0 44 16" aria-hidden="true">
    <path d="M0 6 Q5 2 10 5 L9.5 9 Q5 12 0 10 Z" fill="#b9c7da" />
    <path d="M-1 5 Q5 1 11 6" stroke="#5c6f8c" strokeWidth="1.5" fill="none" />
    <circle cx="5" cy="7.5" r="2.700" fill="#1d3557" />
    <path d="M12 6 V3 Q12 1 15 1 Q18 1 18 4 V8" stroke="#b98a1e" strokeWidth="1.8" fill="none" />
    <rect x="16.5" y="6.5" width="10" height="8" fill="#e2b13c" stroke="#8a6415" strokeWidth="1" />
    <path d="M17 9.5 H26 M17 12 H26" stroke="#a87a1c" strokeWidth="1" />
    <circle cx="35" cy="7.5" r="5.5" fill="none" stroke="#ffc400" strokeWidth="1" strokeDasharray="1.5 1.5" />
    <circle cx="35" cy="7.5" r="4.5" fill="#ffb300" />
    <circle cx="34.5" cy="7" r="2.5" fill="#ffd54a" />
  </svg>
);

/* ---------- model drawing ---------- */

const slot = (x1: number, y1: number, x2: number, y2: number, r: number) => {
  const len = Math.hypot(x2 - x1, y2 - y1);
  const nx = ((y2 - y1) / len) * r;
  const ny = (-(x2 - x1) / len) * r;
  return `M${x1 - nx} ${y1 - ny} A${r} ${r} 0 0 1 ${x1 + nx} ${y1 + ny} L${x2 + nx} ${y2 + ny} A${r} ${r} 0 0 1 ${x2 - nx} ${y2 - ny} Z`;
};

const centreMarks = [
  [552.5, 323.5], [585.5, 424.5], [617.5, 524.5], [650.5, 624.5],
  [581.5, 583.5], [681.5, 551.5], [613.5, 748], [718.5, 748],
];

const Model = () => (
  <svg role="img" aria-label="模型视图" fill="none">
    <g transform="translate(-45 -168)">
      <g stroke="#fff" strokeWidth="4" strokeLinejoin="round">
        <path d="M459 317.5 L626 264 L675.5 417 L508.5 471 Z" />
        <path d={slot(515.5, 335.5, 542, 415.5, 17.7)} />
        <path d={slot(589, 311.5, 616, 391, 17.7)} />
        <path d="M546 460 L569 531 M640 430 L662 501" />
        <circle cx="604.5" cy="484" r="21.3" />
        <path d="M476 562.5 L736 479 L768.5 578.5 L509 662 Z" />
        <path d="M602 633 L621.5 692 L714.5 662.5 L695 603" />
      </g>
      <g stroke="#f00" strokeWidth="4" strokeLinecap="round">
        <path d="M524 234 L549.5 313 M556.5 334 L582 413.5 M588.5 435 L614 514 M621.5 535 L647 614 M653.5 635 L679.5 714 M683 725 L685.5 731.5" />
        <path d="M496 611 L571 587 M592.5 580 L671 555 M692 547.5 L751.5 529" />
        <path d="M519 748 H603 M624 748 H709 M730 748 H801.5" />
      </g>
      <g fill="#f00">
        {centreMarks.map(([x, y]) => (
          <rect key={`${x}-${y}`} x={x - 1.5} y={y - 1.5} width="3" height="3" />
        ))}
      </g>
      <path d="M736 592 A490 490 0 0 1 760 745" stroke="#0f0" strokeWidth="1.2" />
      <path d="M735.5 591 L741.5 602 L736.5 603.5 Z M760 746 L757.5 734 H762 Z" fill="#0f0" />
      <text transform="translate(768 634) rotate(81)" fontFamily="Liberation Sans, sans-serif" fontSize="27" fill="#0f0">18°</text>
      <text x="201" y="497" fontFamily="Liberation Serif, serif" fontSize="18" fill="#ff0">A</text>

      <g stroke="#fff" strokeWidth="1">
        <path d="M64.5 821.5 H72.5 V829.5 H64.5 Z M68.5 821 V776 M73 825.5 H118" />
        <path d="M68.5 775.5 L65 785.5 H72 Z M118.5 825.5 L107.5 821.5 V829.5 Z" />
        <path d="M128 821 L137 830 M137 821 L128 830 M64 757 L68.5 761.5 L73 757 M68.5 761.5 V767" />
        <path d="M949 848.5 H1245 M1244.5 553 V849 M1223.5 848 V827.5 H1245" />
      </g>

      <g fill="#696969">
        <rect x="970.5" y="811.5" width="245" height="8" fill="none" stroke="#696969" />
        <rect x="970" y="815" width="35" height="5" />
        <rect x="1005" y="811" width="70" height="4" />
        <rect x="1075" y="815" width="141" height="5" />
        <g fontFamily="Liberation Sans, sans-serif" fontSize="11" textAnchor="middle">
          <text x="1005" y="808">5</text>
          <text x="1215" y="808">35</text>
          <text x="970" y="830">0</text>
          <text x="1075" y="830">15</text>
        </g>
      </g>
    </g>
  </svg>
);

export default function App() {
  return (
    <Window>
      <GlobalStyle />
      <TitleBar>
        <AppMark />
        <Title>CAD梦想画图(6.3.20221226)&lt;姓赵的呀。,会员1&gt; - 3.mxg*</Title>
        <CaptionButton type="button" aria-label="最小化">
          <svg width="11" height="11"><path d="M0 5.5 H10" stroke="#000" /></svg>
        </CaptionButton>
        <CaptionButton type="button" aria-label="最大化">
          <svg width="11" height="11"><path d="M0.5 0.5 H9.5 V9.5 H0.5 Z" fill="none" stroke="#000" /></svg>
        </CaptionButton>
        <CaptionButton type="button" aria-label="关闭">
          <svg width="11" height="11"><path d="M0.5 0.5 L10 10 M10 0.5 L0.5 10" stroke="#000" /></svg>
        </CaptionButton>
      </TitleBar>

      <MenuBar>
        <MenuGrip />
        {menus.map(([name, key]) => (
          <MenuButton key={key} type="button">{name}(<u>{key}</u>)</MenuButton>
        ))}
      </MenuBar>

      <Client>
        <TabStrip>
          <DocTab type="button" $slanted $width={77}><span>MxCAD云图</span></DocTab>
          <DocTab type="button" $width={72}><span>MxCloud1</span></DocTab>
          <DocTab type="button" $slanted $active $width={54}><span>3.mxg*</span></DocTab>
          <TabTools>
            <TabTool type="button" aria-label="向左滚动">
              <svg width="6" height="9"><path d="M5 0.5 V8.5 L1 4.5 Z" fill="none" stroke="#000" /></svg>
            </TabTool>
            <TabTool type="button" aria-label="向右滚动">
              <svg width="6" height="9"><path d="M1 0.5 V8.5 L5 4.5 Z" fill="none" stroke="#000" /></svg>
            </TabTool>
            <TabTool type="button" aria-label="关闭图纸">
              <svg width="8" height="8"><path d="M0.5 0.5 L7.5 7.5 M7.5 0.5 L0.5 7.5" stroke="#000" strokeWidth="1.7" /></svg>
            </TabTool>
          </TabTools>
        </TabStrip>

        <Bands>
          <Toolbar>
            <Grip />
            <Tools items={standardTools} />
          </Toolbar>
          <PropertyBar>
            <Grip />
            <ToolButton type="button" aria-label="图层"><Layers /></ToolButton>
            <Combo $width={250}>
              <LayerState />
              <ColorBox />
              <ComboSelect aria-label="当前图层" defaultValue="0"><option>0</option></ComboSelect>
              <Chevron />
            </Combo>
            <Separator />
            <Combo $width={120}>
              <ColorBox />
              <ComboSelect aria-label="颜色" defaultValue="ByLayer"><option>ByLayer</option></ComboSelect>
              <Chevron />
            </Combo>
            <Separator />
            <Combo $width={180}>
              <LineSample />
              <ComboSelect aria-label="线型" defaultValue="ByLayer"><option>ByLayer</option></ComboSelect>
              <Chevron />
            </Combo>
            <ToolButton type="button" aria-label="线型管理">
              <Icon>
                <path d="M0 27 H4 M7 27 H13 M16 27 H23 M26 27 H30" stroke={BLUE} strokeWidth="3.5" />
                <Pencil x={8} y={1} />
              </Icon>
            </ToolButton>
          </PropertyBar>
        </Bands>

        <WorkArea>
          <SideDock>
            <Grip $across />
            <DockColumn><Tools items={drawTools} across /></DockColumn>
          </SideDock>

          <CanvasColumn>
            <Canvas><Model /></Canvas>
            <SheetTabs>
              <SheetNav type="button" aria-label="上一个布局">
                <svg width="6" height="9"><path d="M5.5 0 V9 L0.5 4.5 Z" fill="#555" /></svg>
              </SheetNav>
              <SheetNav type="button" aria-label="下一个布局">
                <svg width="6" height="9"><path d="M0.5 0 V9 L5.5 4.5 Z" fill="#555" /></svg>
              </SheetNav>
              <SheetTab type="button">
                <svg width="48" height="17"><path d="M1 0 L8 15.5 H40 L48 0" fill="#fff" stroke="#000" /></svg>
                <span>模型</span>
              </SheetTab>
            </SheetTabs>
          </CanvasColumn>

          <SideDock $right>
            <Grip $across />
            <DockColumns>
              <DockColumn $ruled><Tools items={dimensionTools} across /></DockColumn>
              <DockColumn><Tools items={editTools} across /></DockColumn>
            </DockColumns>
          </SideDock>
        </WorkArea>

        <CommandPanel>
          <CommandFrame>
            <LogRow>
              <Log>
                <LogLine> <Han>选择一个目标对象，或输入</Han>[S]<Han>进行设置：</Han></LogLine>
                <LogLine> <Han>选择一个目标对象，或输入</Han>[S]<Han>进行设置：</Han> <Han>已结束</Han></LogLine>
                <LogLine><Han>命令</Han>: _Draw2LineAngularDimension</LogLine>
                <LogLine> <Han>选择直线段</Han>1: <Han>选择直线段</Han>2:</LogLine>
              </Log>
              <ScrollBar>
                <ScrollArrow type="button" aria-label="向上滚动"><Chevron bold turn={180} /></ScrollArrow>
                <Thumb />
                <ScrollArrow type="button" aria-label="向下滚动"><Chevron bold /></ScrollArrow>
              </ScrollBar>
            </LogRow>
            <InputRow>
              <Prompt htmlFor="command"><Han>命令</Han>: </Prompt>
              <CommandInput id="command" />
              <ScrollBar $across>
                <ScrollArrow type="button" aria-label="向左"><Chevron bold turn={90} /></ScrollArrow>
                <Thumb $across />
                <ScrollArrow type="button" aria-label="向右"><Chevron bold turn={270} /></ScrollArrow>
              </ScrollBar>
            </InputRow>
          </CommandFrame>
        </CommandPanel>

        <StatusBar>
          <Coordinates>{"-6677.776328,   100710.979904,   0.000000"}</Coordinates>
          {toggles.map(([name, on]) => (
            <StatusToggle key={name} type="button" $on={on} aria-pressed={on}>{name}</StatusToggle>
          ))}
          <FeedbackLink href="#feedback">提交软件问题或增加新功能</FeedbackLink>
          <Brand><BrandMark />MxCAD</Brand>
        </StatusBar>
      </Client>

      <Watermark aria-hidden="true">激活<small>转到</small></Watermark>
    </Window>
  );
}
